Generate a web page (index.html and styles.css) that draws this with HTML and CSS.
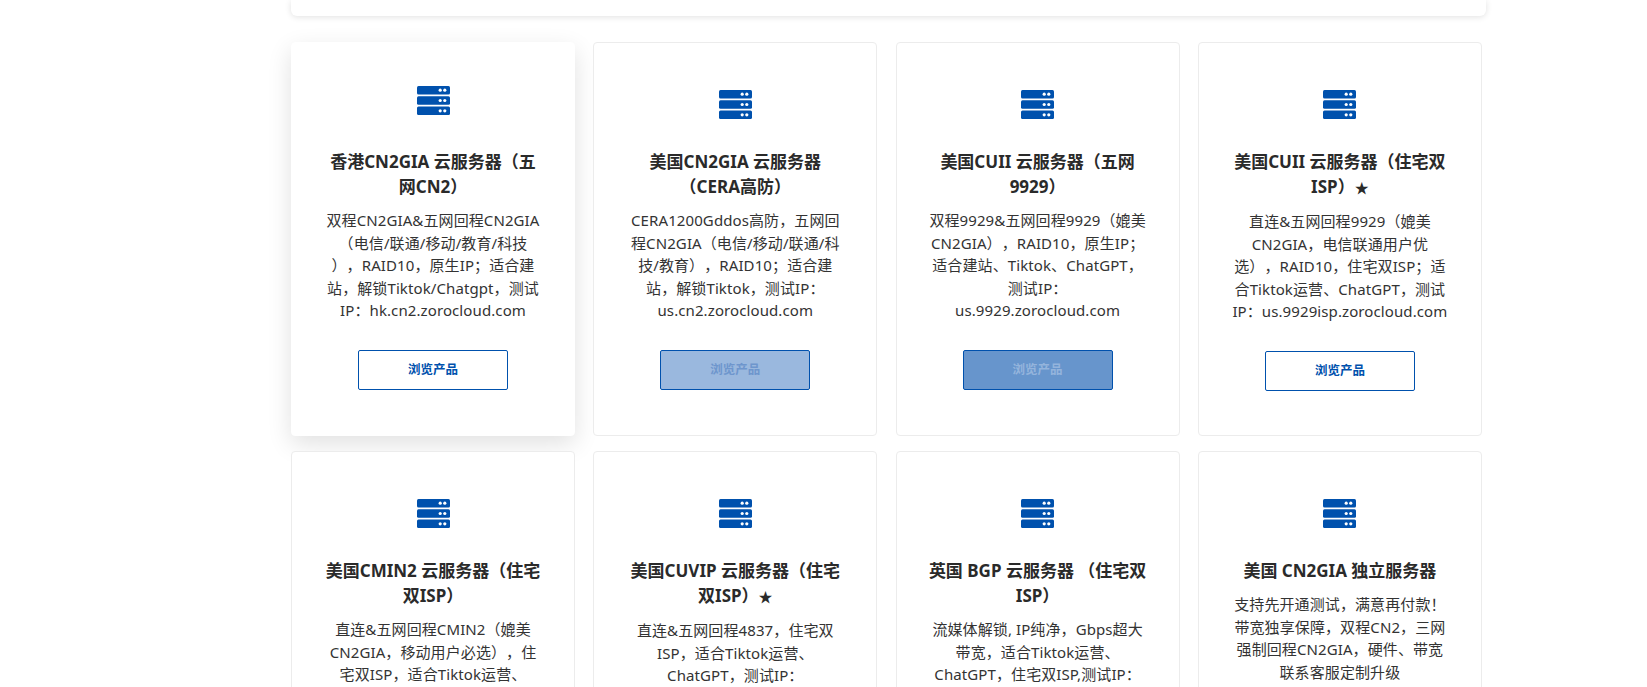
FILE: index.html
```html
<!DOCTYPE html>
<html lang="zh-CN">
<head>
    <meta charset="UTF-8">
    <meta name="viewport" content="width=device-width, initial-scale=1.0">
    <title>云服务器</title>
    <link rel="stylesheet" href="styles.css">
</head>
<body>
    <svg class="icon-defs" width="0" height="0">
        <symbol id="server" viewBox="0 0 33 29">
            <rect y="0" width="33" height="8.4" rx="1.5"/>
            <rect y="10.3" width="33" height="8.4" rx="1.5"/>
            <rect y="20.6" width="33" height="8.4" rx="1.5"/>
            <g class="icon-dots">
                <circle cx="23.2" cy="4.2" r="1.6"/>
                <circle cx="27.8" cy="4.2" r="1.6"/>
                <circle cx="23.2" cy="14.5" r="1.6"/>
                <circle cx="27.8" cy="14.5" r="1.6"/>
                <circle cx="23.2" cy="24.8" r="1.6"/>
                <circle cx="27.8" cy="24.8" r="1.6"/>
            </g>
        </symbol>
    </svg>
    <main class="page">
        <div class="top-panel"></div>
        <div class="plans">
            <section class="plan plan-active">
                <svg class="plan-icon"><use href="#server"/></svg>
                <h3>香港CN2GIA 云服务器（五<br>网CN2）</h3>
                <p>双程CN2GIA&amp;五网回程CN2GIA<br>（电信/联通/移动/教育/科技<br>），RAID10，原生IP；适合建<br>站，解锁Tiktok/Chatgpt，测试<br>IP：hk.cn2.zorocloud.com</p>
                <a class="btn">浏览产品</a>
            </section>
            <section class="plan">
                <svg class="plan-icon"><use href="#server"/></svg>
                <h3>美国CN2GIA 云服务器<br>（CERA高防）</h3>
                <p>CERA1200Gddos高防，五网回<br>程CN2GIA（电信/移动/联通/科<br>技/教育），RAID10；适合建<br>站，解锁Tiktok，测试IP：<br>us.cn2.zorocloud.com</p>
                <a class="btn btn-fade-light">浏览产品</a>
            </section>
            <section class="plan">
                <svg class="plan-icon"><use href="#server"/></svg>
                <h3>美国CUII 云服务器（五网<br>9929）</h3>
                <p>双程9929&amp;五网回程9929（媲美<br>CN2GIA），RAID10，原生IP；<br>适合建站、Tiktok、ChatGPT，<br>测试IP：<br>us.9929.zorocloud.com</p>
                <a class="btn btn-fade-dark">浏览产品</a>
            </section>
            <section class="plan">
                <svg class="plan-icon"><use href="#server"/></svg>
                <h3>美国CUII 云服务器（住宅双<br>ISP）<span class="star">★</span></h3>
                <p>直连&amp;五网回程9929（媲美<br>CN2GIA，电信联通用户优<br>选），RAID10，住宅双ISP；适<br>合Tiktok运营、ChatGPT，测试<br>IP：us.9929isp.zorocloud.com</p>
                <a class="btn">浏览产品</a>
            </section>
            <section class="plan">
                <svg class="plan-icon"><use href="#server"/></svg>
                <h3>美国CMIN2 云服务器（住宅<br>双ISP）</h3>
                <p>直连&amp;五网回程CMIN2（媲美<br>CN2GIA，移动用户必选），住<br>宅双ISP，适合Tiktok运营、</p>
            </section>
            <section class="plan">
                <svg class="plan-icon"><use href="#server"/></svg>
                <h3>美国CUVIP 云服务器（住宅<br>双ISP）<span class="star">★</span></h3>
                <p>直连&amp;五网回程4837，住宅双<br>ISP，适合Tiktok运营、<br>ChatGPT，测试IP：</p>
            </section>
            <section class="plan">
                <svg class="plan-icon"><use href="#server"/></svg>
                <h3>英国 BGP 云服务器 （住宅双<br>ISP）</h3>
                <p>流媒体解锁, IP纯净，Gbps超大<br>带宽，适合Tiktok运营、<br>ChatGPT，住宅双ISP,测试IP：</p>
            </section>
            <section class="plan">
                <svg class="plan-icon"><use href="#server"/></svg>
                <h3>美国 CN2GIA 独立服务器</h3>
                <p>支持先开通测试，满意再付款！<br>带宽独享保障，双程CN2，三网<br>强制回程CN2GIA，硬件、带宽<br>联系客服定制升级</p>
            </section>
        </div>
    </main>
</body>
</html>
```

FILE: styles.css
```css
html, body {
    height: 100%;
    margin: 0;
    overflow: hidden;
}
body {
    background-color: #fff;
    color: #333;
    font-family: "Noto Sans", "Noto Sans CJK SC", sans-serif;
    text-spacing-trim: space-all;
}
.icon-defs {
    display: block;
    height: 0;
}
.icon-dots {
    fill: #fff;
}
.page {
    width: 1195px;
    margin-left: 291px;
}
.top-panel {
    height: 16px;
    background-color: #fff;
    border-radius: 0 0 6px 6px;
    box-shadow: 0 1px 6px rgba(0, 0, 0, 0.12);
}
.plans {
    display: grid;
    grid-template-columns: repeat(4, 284px);
    column-gap: 18.3px;
    row-gap: 15px;
    margin-top: 26px;
}
.plan {
    box-sizing: border-box;
    min-height: 394px;
    padding: 47px 20px 0;
    background-color: #fff;
    border: 1px solid #ececec;
    border-radius: 4px;
    text-align: center;
}
.plan-active {
    border-color: #fff;
    box-shadow: 0 8px 24px rgba(0, 0, 0, 0.12);
}
.plan-icon {
    display: block;
    width: 33px;
    height: 29px;
    margin: 0 auto;
    fill: #0051ad;
}
.plan-active .plan-icon {
    transform: translateY(-4px);
}
.plan h3 {
    margin: 30px 0 0;
    font-size: 17px;
    font-weight: 700;
    line-height: 25px;
    color: #2a2a2a;
    white-space: nowrap;
}
.star {
    font-size: 14px;
    font-weight: 400;
}
.plan p {
    margin: 10px 0 0;
    font-size: 15px;
    line-height: 22.5px;
    letter-spacing: 0.1px;
    white-space: nowrap;
}
.btn {
    display: block;
    box-sizing: border-box;
    width: 150px;
    height: 40px;
    margin: 28px auto 0;
    background-color: #fff;
    border: 1px solid #0051ad;
    border-radius: 2px;
    color: #0051ad;
    font-size: 12.5px;
    font-weight: 700;
    line-height: 38px;
}
.btn-fade-light {
    background-color: #9ab8de;
    color: #6e96cd;
}
.btn-fade-dark {
    background-color: #6795cc;
    color: #94b4dc;
}
```
